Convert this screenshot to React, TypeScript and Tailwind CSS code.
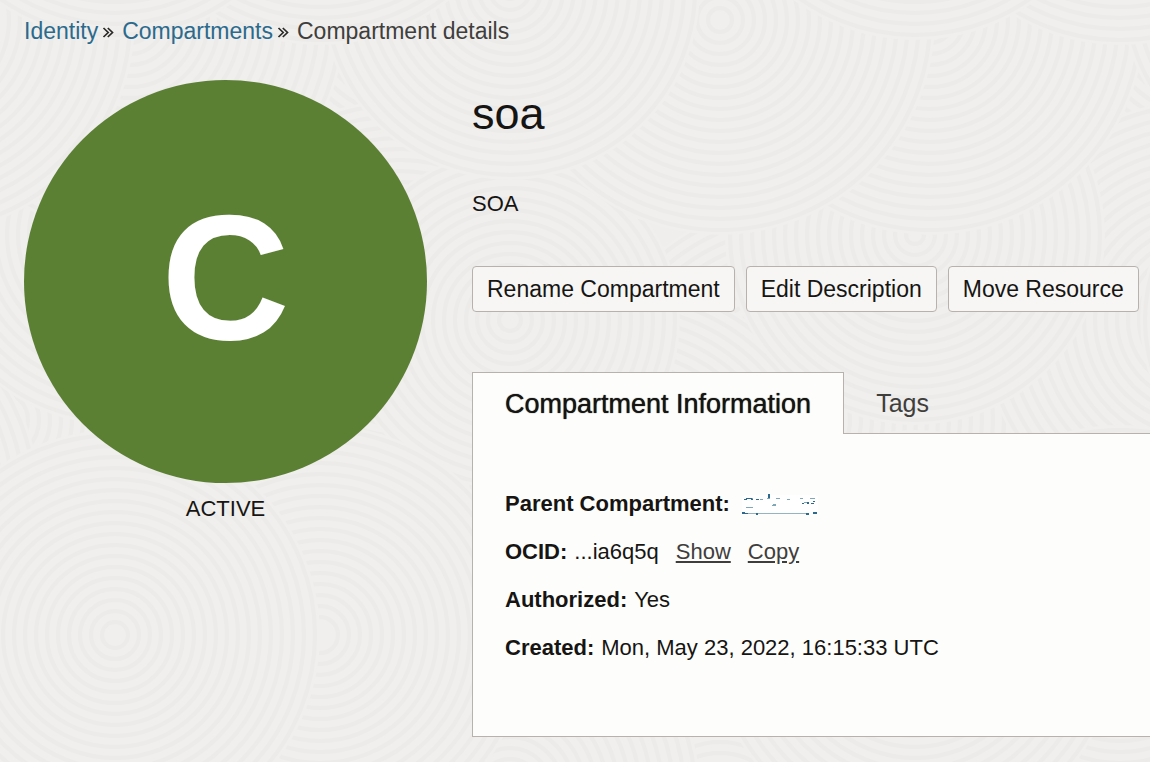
import React from "react";

type Disc = { x: number; y: number; r: number };

const TILE = 800;

// Painted in order: later discs overlap earlier ones.
const DISCS: Disc[] = [
  { x: 0, y: 420, r: 220 },
  { x: 400, y: 20, r: 220 },
  { x: 400, y: 320, r: 220 },
  { x: 620, y: 500, r: 220 },
  { x: 115, y: 235, r: 190 },
  { x: 510, y: 320, r: 170 },
  { x: 130, y: 20, r: 215 },
  { x: 720, y: 20, r: 215 },
  { x: 510, y: 790, r: 190 },
  { x: 320, y: 635, r: 210 },
  { x: 115, y: 635, r: 205 },
];

function Rings({ x, y, r }: Disc) {
  const rings: number[] = [];
  for (let radius = r - 5; radius > 8; radius -= 11) rings.push(radius);
  return (
    <g>
      <circle cx={x} cy={y} r={r} fill="#f0efed" />
      {rings.map((radius) => (
        <circle key={radius} cx={x} cy={y} r={radius} fill="none" stroke="#ecebe9" strokeWidth="4" />
      ))}
    </g>
  );
}

function Backdrop() {
  return (
    <svg className="absolute inset-0 -z-10 h-full w-full" aria-hidden="true">
      <defs>
        <pattern id="rings" width={TILE} height={TILE} patternUnits="userSpaceOnUse">
          <rect width={TILE} height={TILE} fill="#efeeec" />
          {DISCS.flatMap((disc, i) =>
            [-TILE, 0, TILE].flatMap((dx) =>
              [-TILE, 0, TILE].map((dy) => (
                <Rings key={`${i}:${dx}:${dy}`} x={disc.x + dx} y={disc.y + dy} r={disc.r} />
              )),
            ),
          )}
        </pattern>
      </defs>
      <rect width="100%" height="100%" fill="url(#rings)" />
    </svg>
  );
}

function Separator() {
  return (
    <svg className="ml-1 mr-2 mt-1 h-3 w-3" viewBox="0 0 12 12" fill="none" stroke="#2a2927" strokeWidth="1.7" aria-hidden="true">
      <path d="M1.5 1 6.2 5.5 1.5 10M5.8 1 10.5 5.5 5.8 10" />
    </svg>
  );
}

function RedactedName() {
  return (
    <svg width="82" height="24" viewBox="-5 0 82 24" aria-hidden="true">
      <rect x="0" y="3" width="76" height="18" rx="4" fill="#ffffff" />
      <g fill="#2b6a8c">
        <path d="M4 6h6v1H4zM2 7h3v1H2zM9 7h2v1H9z" />
        <path d="M26 2h2v4h-2z" />
        <path d="M14 7h3v1h-3zM60 11h2v1h-2zM65 10h2v2h-2zM69 11h3v1h-3zM71 9h2v1h-2z" />
        <path d="M0 21h6v1H0zM0 20h3v1H0zM14 21h2v2h-2zM64 21h3v2h-3zM71 20h4v2h-4z" />
        <path
          d="M10 6h1v1h-1zM18 7h3v1h-3zM25 6h3v1h-3zM34 6h4v1h-4zM45 7h3v1h-3zM58 6h3v1h-3zM68 6h5v1h-5zM4 15h7v1H4zM30 13h4v1h-4zM31 12h3v1h-3zM62 10h3v1h-3z"
          opacity="0.6"
        />
        <path d="M6 21h58v1H6z" opacity="0.5" />
      </g>
    </svg>
  );
}

function ActionButton({ children }: { children: React.ReactNode }) {
  return (
    <button
      type="button"
      className="h-[46px] shrink-0 whitespace-nowrap rounded border border-[#b8b2ae] bg-[#f7f6f4] px-[14px] text-[23px] leading-7"
    >
      {children}
    </button>
  );
}

function Detail({ label, children }: { label: string; children: React.ReactNode }) {
  return (
    <div className="flex h-12 items-center gap-[7px]">
      <dt className="font-bold">{label}</dt>
      <dd className="flex items-center gap-[17px]">{children}</dd>
    </div>
  );
}

export default function App() {
  return (
    <div className="relative isolate min-h-screen overflow-hidden bg-[#efeeec] pb-[25px] pl-6 font-['Liberation_Sans',Arial,sans-serif] text-[22px] leading-7 text-[#161513]">
      <Backdrop />
      <nav aria-label="Breadcrumb" className="pt-[17px]">
        <ol className="flex items-center text-[23px] leading-7">
          <li className="flex items-center">
            <a href="#identity" className="text-[#2b6a8c]">Identity</a>
            <Separator />
          </li>
          <li className="flex items-center">
            <a href="#compartments" className="text-[#2b6a8c]">Compartments</a>
            <Separator />
          </li>
          <li aria-current="page" className="text-[#403e3c]">Compartment details</li>
        </ol>
      </nav>

      <div className="mt-[35px] flex items-start gap-[45px]">
        <aside className="w-[403px] shrink-0 text-center">
          <div className="flex aspect-square w-full items-center justify-center rounded-full bg-[#5b8034] pb-2 text-[178px] font-bold leading-none text-white">
            C
          </div>
          <p className="mt-3">ACTIVE</p>
        </aside>

        <main className="min-w-0 flex-1">
          <h1 className="pt-2 text-[45px] leading-[52px]">soa</h1>
          <p className="mt-[50px]">SOA</p>

          <div className="mt-12 flex gap-[11px] pr-2">
            <ActionButton>Rename Compartment</ActionButton>
            <ActionButton>Edit Description</ActionButton>
            <ActionButton>Move Resource</ActionButton>
          </div>

          <div role="tablist" className="mt-[60px] flex">
            <button
              type="button"
              role="tab"
              id="tab-information"
              aria-selected="true"
              aria-controls="panel-information"
              className="h-[62px] whitespace-nowrap border border-b-0 border-[#b8b2ae] bg-[#fdfdfb] px-8 text-[27px] [text-shadow:0_0_1px_#161513]"
            >
              Compartment Information
            </button>
            <div className="flex h-[62px] flex-1 border-b border-[#b8b2ae]">
              <button type="button" role="tab" aria-selected="false" className="px-8 text-[25px] text-[#403e3c]">
                Tags
              </button>
            </div>
          </div>

          <section
            id="panel-information"
            role="tabpanel"
            aria-labelledby="tab-information"
            className="border-b border-l border-[#b8b2ae] bg-[#fdfdfb] px-8 pb-16 pt-[46px]"
          >
            <dl>
              <Detail label="Parent Compartment:">
                <a href="#parent" aria-label="Parent compartment">
                  <RedactedName />
                </a>
              </Detail>
              <Detail label="OCID:">
                <span>...ia6q5q</span>
                <button type="button" className="text-[#403e3c] underline underline-offset-2">Show</button>
                <button type="button" className="text-[#403e3c] underline underline-offset-2">Copy</button>
              </Detail>
              <Detail label="Authorized:">Yes</Detail>
              <Detail label="Created:">Mon, May 23, 2022, 16:15:33 UTC</Detail>
            </dl>
          </section>
        </main>
      </div>
    </div>
  );
}
